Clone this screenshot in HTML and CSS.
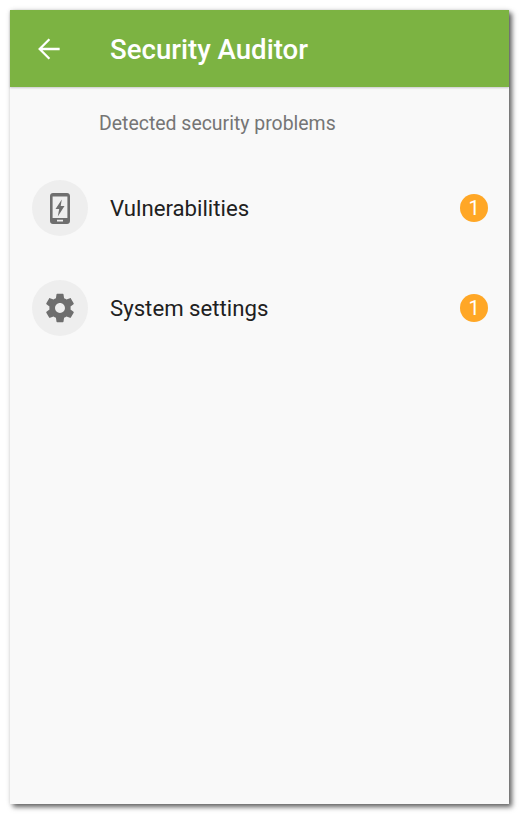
FILE: index.html
```html
<!DOCTYPE html>
<html lang="en">
<head>
<meta charset="utf-8">
<title>Security Auditor</title>
<link rel="stylesheet" href="styles.css">
</head>
<body>
<div class="screen">
  <header class="appbar">
    <svg class="back" viewBox="0 0 24 24" width="32" height="32"><path d="M20 12H5M12.300 4.700L5 12l7.300 7.300" fill="none" stroke="#fff" stroke-width="1.700"/></svg>
    <h1 class="title">Security Auditor</h1>
  </header>
  <p class="caption">Detected security problems</p>
  <ul class="list">
    <li class="row">
      <span class="avatar">
        <svg viewBox="0 0 20 31" width="20" height="31"><path fill="#6e6e6e" fill-rule="evenodd" d="M3 0h14c1.700 0 3 1.300 3 3v25c0 1.700-1.300 3-3 3H3c-1.700 0-3-1.300-3-3V3c0-1.700 1.300-3 3-3zM2.600 3.500v21.500h14.800V3.500zM7 26.800v1.700h6v-1.700zM11.800 6.500L5.500 16h3.700l-1.400 7.500L14.500 13h-3.800z"/></svg>
      </span>
      <span class="label">Vulnerabilities</span>
      <span class="badge">1</span>
    </li>
    <li class="row">
      <span class="avatar">
        <svg viewBox="0 0 24 24" width="34" height="34"><path fill="#6e6e6e" d="M19.430 12.980c.04-.32.07-.64.07-.98s-.03-.66-.07-.98l2.110-1.650c.19-.15.24-.42.12-.64l-2-3.460c-.12-.22-.39-.3-.61-.22l-2.490 1c-.52-.4-1.080-.73-1.690-.98l-.38-2.650A.49.49 0 0 0 14 2h-4c-.25 0-.46.18-.49.420l-.38 2.650c-.61.250-1.170.59-1.690.98l-2.490-1c-.23-.09-.49 0-.61.220l-2 3.460c-.13.220-.07.490.12.640l2.110 1.650c-.04.320-.07.650-.07.980s.03.660.07.980l-2.110 1.650c-.19.150-.24.420-.12.640l2 3.460c.12.220.39.300.61.220l2.490-1c.52.400 1.080.730 1.690.980l.38 2.650c.03.240.24.420.49.420h4c.25 0 .46-.18.490-.42l.38-2.650c.61-.25 1.170-.59 1.690-.98l2.490 1c.23.090.49 0 .61-.22l2-3.460c.12-.22.070-.49-.12-.64l-2.110-1.650zM12 15.500c-1.930 0-3.500-1.570-3.500-3.500s1.570-3.500 3.500-3.500 3.500 1.570 3.500 3.500-1.570 3.500-3.500 3.500z"/></svg>
      </span>
      <span class="label">System settings</span>
      <span class="badge">1</span>
    </li>
  </ul>
</div>
</body>
</html>
```
FILE: styles.css
```css
* { box-sizing: border-box; }
html, body { margin: 0; padding: 0; background: #fff; }
body { width: 520px; height: 815px; padding: 10px 0 0 10px; overflow: hidden; font-family: Roboto, sans-serif; }
.screen {
  width: 499px;
  height: 794px;
  background: #f9f9f9;
  box-shadow: 3px 3px 5px rgba(0,0,0,.6), 0 0 5px rgba(0,0,0,.1);
}
.appbar {
  height: 77px;
  background: #7cb342;
  display: flex;
  align-items: center;
  padding-left: 23px;
  box-shadow: 0 1px 2px rgba(0,0,0,.2);
}
.back { flex: none; }
.title { margin: 2px 0 0 45px; font-size: 27.600px; font-weight: 500; color: #fff; }
.caption { margin: 0; padding: 26px 0 0 89px; font-size: 19.450px; line-height: 22px; color: #757575; }
.list { list-style: none; margin: 23px 0 0; padding: 0 21px 0 22px; }
.row { display: flex; align-items: center; height: 100px; }
.avatar {
  flex: none;
  width: 56px;
  height: 56px;
  border-radius: 50%;
  background: #eeeeee;
  display: flex;
  align-items: center;
  justify-content: center;
}
.label { flex: 1; margin-left: 22px; font-size: 22.200px; color: #212121; }
.badge {
  flex: none;
  width: 28px;
  height: 28px;
  border-radius: 50%;
  background: #ffa726;
  color: #fff;
  font-size: 20px;
  display: flex;
  align-items: center;
  justify-content: center;
}
```
